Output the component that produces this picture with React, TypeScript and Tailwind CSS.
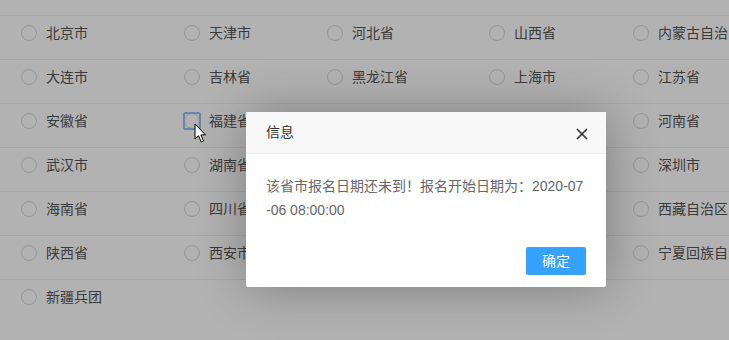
import React from "react";

const rows: string[][] = [
  ["北京市", "天津市", "河北省", "山西省", "内蒙古自治区"],
  ["大连市", "吉林省", "黑龙江省", "上海市", "江苏省"],
  ["安徽省", "福建省", "江西省", "山东省", "河南省"],
  ["武汉市", "湖南省", "广东省", "云南省", "深圳市"],
  ["海南省", "四川省", "重庆市", "贵州省", "西藏自治区"],
  ["陕西省", "西安市", "甘肃省", "青海省", "宁夏回族自治区"],
  ["新疆兵团"],
];

function Item({ label, focused }: { label: string; focused?: boolean }) {
  return (
    <div className="flex items-center h-[20px] whitespace-nowrap">
      <span className="relative w-[16px] h-[16px] shrink-0">
        <span className="absolute inset-0 rounded-full border border-[#d6d8dc] bg-white" />
        {focused && (
          <span className="absolute -left-[1px] -top-[1px] w-[18px] h-[18px] rounded-[2px] border-2 border-[#9bbcf5]" />
        )}
      </span>
      <span className="ml-[9px] text-[14px] text-[#555]">{label}</span>
    </div>
  );
}

export default function App() {
  return (
    <div
      className="relative w-[729px] h-[340px] overflow-hidden bg-white"
      style={{ fontFamily: '"Liberation Sans", "Noto Sans CJK SC", sans-serif' }}
    >
      <div className="w-[900px]">
        <div className="h-[16px] border-b border-[#eeeeee]" />
        {rows.map((r, i) => (
          <div
            key={i}
            className={`h-[44px] pt-[7px] pl-[21px] grid grid-cols-[163px_143px_162px_144px_200px] ${
              i < rows.length - 1 ? "border-b border-[#eeeeee]" : ""
            }`}
          >
            {r.map((c, j) => (
              <Item key={j} label={c} focused={i === 2 && j === 1} />
            ))}
          </div>
        ))}
      </div>

      {/* overlay */}
      <div className="absolute inset-0 bg-black/30" />

      {/* cursor */}
      <svg
        className="absolute left-[194px] top-[123px]"
        width="14"
        height="21"
        viewBox="0 0 14 21"
      >
        <path
          d="M1 1 L1 16 L4.5 12.7 L7.3 19 L9.6 18 L6.9 11.9 L11.6 11.9 Z"
          fill="#fff"
          stroke="#000"
          strokeWidth="1"
          strokeLinejoin="miter"
        />
      </svg>

      {/* dialog */}
      <div className="absolute left-[246px] top-[112px] w-[360px] bg-white rounded-[2px] shadow-[1px_1px_50px_rgba(0,0,0,0.3)]">
        <div className="h-[42px] bg-[#f8f8f8] border-b border-[#eeeeee] flex items-center justify-between pl-[20px] pr-[18px]">
          <span className="text-[14px] text-[#333]">信息</span>
          <svg width="12" height="12" viewBox="0 0 12 12" className="mt-[2px]">
            <path d="M1 1 L11 11 M11 1 L1 11" stroke="#2f2f3a" strokeWidth="1.6" />
          </svg>
        </div>
        <div className="p-[20px] text-[14px] leading-[24px] text-[#666] break-all">
          该省市报名日期还未到！报名开始日期为：2020-07-06 08:00:00
        </div>
        <div className="flex justify-end pr-[20px] pt-[5px] pb-[12px]">
          <button className="h-[28px] w-[60px] rounded-[2px] bg-[#36a2ff] text-white text-[14px] leading-[28px]">
            确定
          </button>
        </div>
      </div>
    </div>
  );
}
